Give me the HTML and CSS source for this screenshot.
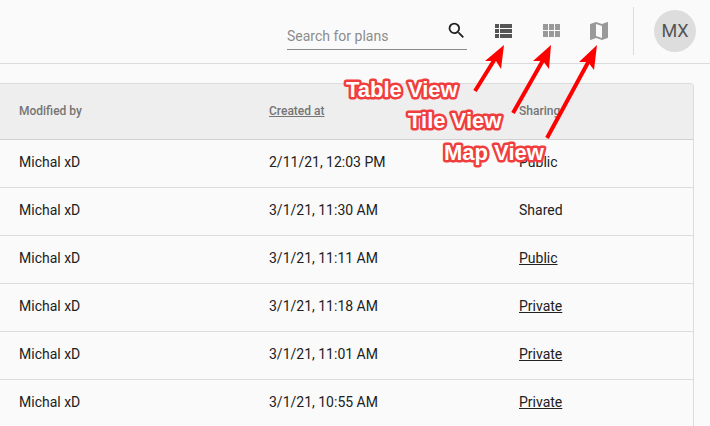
FILE: index.html
```html
<!DOCTYPE html>
<html lang="en">
<head>
<meta charset="utf-8">
<meta name="viewport" content="width=device-width, initial-scale=1">
<title>Plans</title>
<link rel="stylesheet" href="styles.css">
</head>
<body>
<header class="toolbar">
  <form class="search" role="search">
    <input class="search-input" type="text" placeholder="Search for plans" aria-label="Search for plans">
    <button class="search-button" type="button" aria-label="Search">
      <svg viewBox="0 0 24 24"><path d="M15.5 14h-.79l-.28-.27A6.47 6.47 0 0 0 16 9.5 6.5 6.5 0 1 0 9.5 16c1.61 0 3.09-.59 4.23-1.57l.27.28v.79l5 4.99L20.49 19l-4.99-5zm-6 0C7.01 14 5 11.99 5 9.5S7.01 5 9.5 5 14 7.01 14 9.5 11.99 14 9.5 14z"/></svg>
    </button>
  </form>
  <nav class="views" aria-label="View">
    <button class="view active" type="button" aria-label="Table View">
      <svg viewBox="0 0 24 24"><path d="M4 14h4v-4H4v4zm0 5h4v-4H4v4zM4 9h4V5H4v4zm5 5h12v-4H9v4zm0 5h12v-4H9v4zM9 5v4h12V5H9z"/></svg>
    </button>
    <button class="view" type="button" aria-label="Tile View">
      <svg viewBox="0 0 24 24"><path d="M4 11h5V5H4v6zm0 7h5v-6H4v6zm6 0h5v-6h-5v6zm6 0h5v-6h-5v6zm-6-7h5V5h-5v6zm6-6v6h5V5h-5z"/></svg>
    </button>
    <button class="view" type="button" aria-label="Map View">
      <svg viewBox="0 0 24 24"><path d="M20.5 3l-.16.03L15 5.1 9 3 3.36 4.9c-.21.07-.36.25-.36.48V20.5c0 .28.22.5.5.5l.16-.03L9 18.9l6 2.1 5.64-1.9c.21-.07.36-.25.36-.48V3.500c0-.28-.22-.5-.5-.5zM15 19l-6-2.110V5l6 2.110V19z"/></svg>
    </button>
  </nav>
  <div class="account"><button class="avatar" type="button">MX</button></div>
</header>
<main class="content">
  <table class="plans">
    <thead>
      <tr><th>Modified by</th><th><a href="#">Created at</a></th><th>Sharing</th></tr>
    </thead>
    <tbody>
      <tr><td>Michal xD</td><td>2/11/21, 12:03 PM</td><td>Public</td></tr>
      <tr><td>Michal xD</td><td>3/1/21, 11:30 AM</td><td>Shared</td></tr>
      <tr><td>Michal xD</td><td>3/1/21, 11:11 AM</td><td><a href="#">Public</a></td></tr>
      <tr><td>Michal xD</td><td>3/1/21, 11:18 AM</td><td><a href="#">Private</a></td></tr>
      <tr><td>Michal xD</td><td>3/1/21, 11:01 AM</td><td><a href="#">Private</a></td></tr>
      <tr><td>Michal xD</td><td>3/1/21, 10:55 AM</td><td><a href="#">Private</a></td></tr>
    </tbody>
  </table>
</main>
<svg class="callouts" width="280" height="130" viewBox="340 40 280 130">
  <g class="labels">
    <text x="346" y="97">Table View</text>
    <text x="408" y="128">Tile View</text>
    <text x="444" y="160">Map View</text>
  </g>
  <g class="arrows">
    <path class="shaft" d="M475 91L498 54M513 113L546 55M547 138L591 57"/>
    <path d="M504 45L501 69L496 61L485 61z"/>
    <path d="M551 45L549 69L543 61L533 61z"/>
    <path d="M597 45L594 70L588 62L579 62z"/>
  </g>
</svg>
</body>
</html>
```
FILE: styles.css
```css
* {
  box-sizing: border-box;
}

body {
  margin: 0;
  min-height: 100vh;
  overflow: hidden;
  position: relative;
  background: #fafafa;
  color: #212121;
  font: 14px/20px Roboto, sans-serif;
}

button {
  display: block;
  padding: 0;
  border: 0;
  background: none;
  color: inherit;
  font: inherit;
}

button svg {
  display: block;
  width: 100%;
  fill: currentColor;
}

a {
  color: inherit;
}

.toolbar {
  display: flex;
  align-items: center;
  justify-content: flex-end;
  height: 64px;
  padding: 0 14px 1px 0;
  border-bottom: 1px solid #dcdcdc;
}

.search {
  display: flex;
  align-items: center;
  width: 180px;
  height: 32px;
  margin-top: 5px;
  border-bottom: 1px solid #8c8c8c;
}

.search-input {
  flex: 1;
  min-width: 0;
  padding: 6px 0 0;
  border: 0;
  outline: 0;
  background: none;
  font: inherit;
}

.search-input::placeholder {
  color: #8c8c8c;
  opacity: 1;
}

.search-button {
  width: 21px;
  margin-bottom: 6px;
}

.views {
  display: flex;
  gap: 24px;
  margin: 0 22px 0 24px;
}

.view {
  width: 24px;
  color: #999;
}

.view.active {
  color: #555;
}

.account {
  display: flex;
  align-items: center;
  height: 48px;
  padding-left: 20px;
  border-left: 1px solid #dcdcdc;
}

.avatar {
  width: 42px;
  height: 42px;
  border-radius: 50%;
  background: #ddd;
  color: #555;
  font-size: 18px;
}

.content {
  padding: 19px 16px 0 0;
}

.plans {
  width: 100%;
  table-layout: fixed;
  border: 1px solid #dcdcdc;
  border-width: 1px 1px 0 0;
  border-radius: 0 4px 0 0;
  border-spacing: 0;
}

.plans th,
.plans td {
  width: 250px;
  height: 48px;
  padding: 0 0 4px 19px;
  border-bottom: 1px solid #dcdcdc;
  text-align: left;
}

.plans th {
  height: 56px;
  padding-bottom: 2px;
  border-color: #d0d0d0;
  background: #eee;
  color: #757575;
  font-size: 12px;
  font-weight: 500;
}

.plans th:last-child,
.plans td:last-child {
  width: auto;
}

.plans th:last-child {
  border-top-right-radius: 3px;
}

.callouts {
  position: absolute;
  top: 40px;
  right: 90px;
}

.labels {
  fill: #fff;
  stroke: #f03e3e;
  stroke-width: 5px;
  stroke-linejoin: round;
  paint-order: stroke;
  font: bold 22px "Liberation Sans", sans-serif;
}

.arrows {
  fill: #f00;
}

.shaft {
  stroke: #f00;
  stroke-width: 4px;
}
```
